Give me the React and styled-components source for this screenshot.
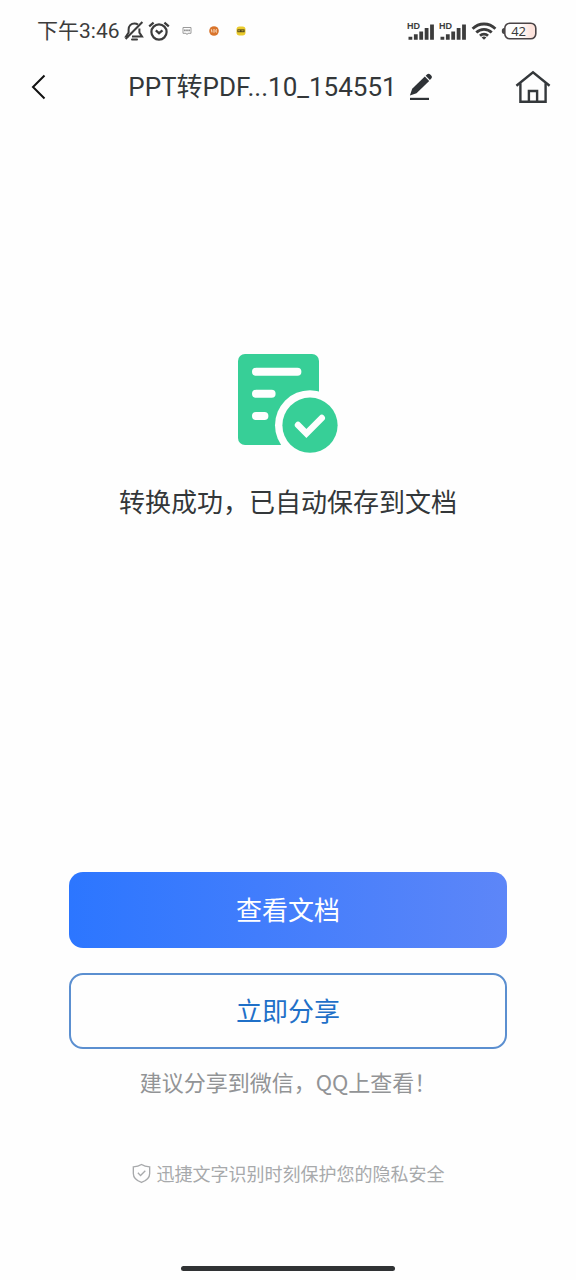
import React from "react";
import styled, { createGlobalStyle } from "styled-components";

const GlobalStyle = createGlobalStyle`
  * {
    box-sizing: border-box;
  }
  body {
    margin: 0;
    background: #fefefe;
    color: #333739;
    font-family: "Noto Sans CJK SC", "Noto Sans", sans-serif;
  }
`;

const Page = styled.div`
  display: flex;
  flex-direction: column;
  min-height: 100vh;
`;

const StatusBar = styled.div`
  display: flex;
  justify-content: space-between;
  align-items: center;
  height: 62px;
  padding: 0 39px 0 37px;
  color: #3c3c3c;
`;

const StatusGroup = styled.div`
  display: flex;
  align-items: center;
  gap: ${(props) => props.$gap}px;
`;

const Time = styled.span`
  font-family: Roboto, "Noto Sans CJK SC", sans-serif;
  font-size: 21px;
  line-height: 24px;
`;

const Notifications = styled.div`
  display: flex;
  align-items: center;
  gap: 17px;
  margin-left: 8px;
`;

const Header = styled.header`
  display: flex;
  justify-content: space-between;
  align-items: center;
  height: 50px;
  padding: 0 25px 0 24px;
`;

const IconButton = styled.button`
  display: flex;
  align-items: center;
  justify-content: center;
  width: ${(props) => props.$width || 36}px;
  height: 36px;
  padding: 0;
  border: none;
  background: none;
  color: inherit;
  cursor: pointer;
`;

const TitleGroup = styled.div`
  display: flex;
  align-items: center;
  gap: 12px;
`;

const Title = styled.h1`
  margin: 0;
  font-family: Roboto, "Noto Sans CJK SC", sans-serif;
  font-size: 26px;
  font-weight: 400;
  line-height: 36px;
  white-space: nowrap;
`;

const Main = styled.main`
  display: flex;
  flex: 1;
  flex-direction: column;
  align-items: center;
  gap: 28px;
  padding: 241px 24px 48px;
`;

const Message = styled.p`
  margin: 0;
  font-size: 26px;
  line-height: 36px;
  text-align: center;
`;

const Actions = styled.div`
  display: flex;
  flex-direction: column;
  gap: 25px;
  padding: 0 12%;
`;

const ActionButton = styled.button`
  height: 76px;
  padding: 0 0 2px;
  border: ${(props) => (props.$primary ? "none" : "2px solid #5b8fd0")};
  border-radius: 14px;
  background: ${(props) =>
    props.$primary ? "linear-gradient(90deg, #2c76ff, #5d86f8)" : "#fefefe"};
  color: ${(props) => (props.$primary ? "#fff" : "#1f70c8")};
  font-family: inherit;
  font-size: 26px;
  line-height: 36px;
  cursor: pointer;
`;

const Hint = styled.p`
  margin: 16px 0 0;
  color: #929496;
  font-size: 22px;
  line-height: 32px;
  text-align: center;
`;

const Privacy = styled.footer`
  display: flex;
  justify-content: center;
  align-items: center;
  gap: 6px;
  margin-top: 64px;
  color: #a7a9ab;
  font-size: 18px;
  line-height: 24px;
`;

const HomeIndicator = styled.div`
  width: 37%;
  height: 5px;
  margin: 81px auto 9px;
  border-radius: 3px;
  background: #303234;
`;

const BellOffIcon = () => (
  <svg width="20" height="20" viewBox="0 0 20 20" fill="none" stroke="currentColor" strokeWidth="2">
    <path d="M14 3.6C13 2.8 11.800 2.400 10.400 2.400 7 2.400 4.600 5 4.600 8.400v3.100L2 15.500h2.500" />
    <path d="M15.400 7.400v4.200l2.600 3.900H8" />
    <path d="M18.400 1 1.600 18" />
    <path d="M8 18.600h5" strokeLinecap="round" />
  </svg>
);

const AlarmIcon = () => (
  <svg width="22" height="20" viewBox="0 0 22 20" fill="none" stroke="currentColor" strokeWidth="2.2">
    <circle cx="11" cy="11" r="7.6" />
    <path d="m7.8 9.4 3.2 2.8 3.5-2.8" />
    <path d="M1.2 5.4 5.6 1.6M20.8 5.4l-4.4-3.8" />
  </svg>
);

const ChatIcon = () => (
  <svg width="10" height="10" viewBox="0 0 10 10" fill="none">
    <path d="M1 1.5h8v5.800H5.800L5 8.600l-.8-1.300H1z" stroke="#9a9a9a" />
    <path d="M2.2 4.4h5.6" stroke="#777" strokeWidth="1.6" strokeDasharray="1.4 .7" />
  </svg>
);

const OrangeAppIcon = () => (
  <svg width="10" height="10" viewBox="0 0 10 10" fill="none">
    <circle cx="5" cy="5" r="4.8" fill="#d9742b" />
    <path d="m2.4 3.4.6 3M5 3v3.8M7.6 3.2 6.8 5l.8 1.6" stroke="#f7d9bd" strokeWidth="1.1" />
  </svg>
);

const YellowAppIcon = () => (
  <svg width="10" height="10" viewBox="0 0 10 10" fill="none">
    <rect x=".5" y=".5" width="9" height="9" rx="3" fill="#ebcb2c" />
    <path d="M1.4 3.4h7.2v2.8H1.4z" fill="#473f1b" />
    <path d="M2 4.8h2.2M5.4 4.8h2.2" stroke="#d8bf43" strokeWidth=".9" />
  </svg>
);

const SignalIcon = () => (
  <svg width="28" height="20" viewBox="0 0 28 20" fill="currentColor">
    <text x="0" y="8" fontSize="9" fontWeight="700" fontFamily="Liberation Sans, sans-serif">
      HD
    </text>
    <path d="M1.500 15.800h3.800v3H1.500zM6.900 13.200h3.800v5.600H6.900zM12.300 10.400h3.800v8.400h-3.800zM17.700 7h3.800v11.800h-3.800zM23.100 3.400h3.800v15.400h-3.800z" />
  </svg>
);

const WifiIcon = () => (
  <svg width="26" height="18" viewBox="0 0 26 18" fill="none" stroke="currentColor" strokeWidth="2.8">
    <path d="M1.6 6.8c6.4-6.4 16.4-6.4 22.8 0" />
    <path d="M5.3 10.5c4.3-4.2 11.1-4.2 15.4 0" />
    <path d="M9 13.8c2.3-2.1 5.7-2.1 8 0" />
    <path d="M10.6 15.4c1.4-1.2 3.4-1.2 4.8 0L13 17.8z" fill="currentColor" stroke="none" />
  </svg>
);

const BatteryIcon = () => (
  <svg width="36" height="18" viewBox="0 0 36 18" fill="none">
    <defs>
      <linearGradient id="charge">
        <stop offset=".5" stopColor="#fefefe" />
        <stop offset=".85" stopColor="#fde3dc" />
      </linearGradient>
    </defs>
    <rect x="3.8" y="1.2" width="31" height="15.6" rx="5" fill="url(#charge)" stroke="#4a4446" strokeWidth="1.6" />
    <path d="M2.4 6.4C.9 6.8.9 11.2 2.4 11.6z" fill="#3c3c3c" stroke="#3c3c3c" />
    <text x="17.6" y="13.6" textAnchor="middle" fontSize="13" fontFamily="Noto Sans, sans-serif" fill="#3c3c3c">
      42
    </text>
  </svg>
);

const BackIcon = () => (
  <svg width="22" height="26" viewBox="0 0 22 26" fill="none" stroke="#111" strokeWidth="2">
    <path d="M20.5 1.5 9 13l11.5 11.5" />
  </svg>
);

const EditIcon = () => (
  <svg width="24" height="28" viewBox="0 0 24 28" fill="#2e3236">
    <path d="m.9 22.400 2.300-6.600L15.800 3.600l4.400 4.400L7.500 20.300z" />
    <path d="m16.700 2.800 1.500-1.500c1-.9 2.100-.8 3 .1l1 1c.9.900 1 2 .1 3l-1.400 1.500z" />
    <path d="M1 24.800h19v2.200H1z" />
  </svg>
);

const HomeIcon = () => (
  <svg width="36" height="34" viewBox="0 0 36 34" fill="none" stroke="#34383b" strokeWidth="2.4">
    <path d="M1.4 15.800 18 2.400l16.600 13.400" />
    <path d="M5.4 13.200v18.600h25.200V13.200" />
    <path d="M13.9 31.800V21h8.200v10.800" />
  </svg>
);

const SuccessIcon = () => (
  <svg width="102" height="102" viewBox="0 0 102 102" fill="none">
    <rect x="1" y="1" width="81" height="91" rx="7" fill="#37cf97" />
    <path d="M19 18.8h41.4M19 40.8h15.6M19 63h8.400" stroke="#fefefe" strokeWidth="8" strokeLinecap="round" />
    <circle cx="73" cy="72.2" r="35" fill="#fefefe" />
    <circle cx="73" cy="72.2" r="27.6" fill="#37cf97" />
    <path d="m61 72 8.4 8.400L84.800 65" stroke="#fefefe" strokeWidth="6.4" strokeLinecap="round" />
  </svg>
);

const ShieldIcon = () => (
  <svg width="19" height="21" viewBox="0 0 20 22" fill="none" stroke="currentColor" strokeWidth="1.4">
    <path d="M10 1.6c2.4 1.7 5.2 2.4 8.6 2.4v7c0 4.4-3.6 7.6-8.6 9.4C5 18.6 1.4 15.4 1.4 11V4C4.8 4 7.6 3.3 10 1.6z" />
    <path d="m6.2 10.2 2.8 3 5-5" />
  </svg>
);

const App = () => {
  return (
    <Page>
      <GlobalStyle />
      <StatusBar>
        <StatusGroup $gap={4}>
          <Time>下午3:46</Time>
          <BellOffIcon />
          <AlarmIcon />
          <Notifications>
            <ChatIcon />
            <OrangeAppIcon />
            <YellowAppIcon />
          </Notifications>
        </StatusGroup>
        <StatusGroup $gap={4}>
          <SignalIcon />
          <SignalIcon />
          <WifiIcon />
          <BatteryIcon />
        </StatusGroup>
      </StatusBar>

      <Header>
        <IconButton $width={22} aria-label="返回">
          <BackIcon />
        </IconButton>
        <TitleGroup>
          <Title>PPT转PDF...10_154551</Title>
          <IconButton $width={24} aria-label="重命名">
            <EditIcon />
          </IconButton>
        </TitleGroup>
        <IconButton aria-label="首页">
          <HomeIcon />
        </IconButton>
      </Header>

      <Main>
        <SuccessIcon />
        <Message>转换成功，已自动保存到文档</Message>
      </Main>

      <Actions>
        <ActionButton $primary>查看文档</ActionButton>
        <ActionButton>立即分享</ActionButton>
      </Actions>
      <Hint>建议分享到微信，QQ上查看！</Hint>
      <Privacy>
        <ShieldIcon />
        迅捷文字识别时刻保护您的隐私安全
      </Privacy>
      <HomeIndicator />
    </Page>
  );
};

export default App;
